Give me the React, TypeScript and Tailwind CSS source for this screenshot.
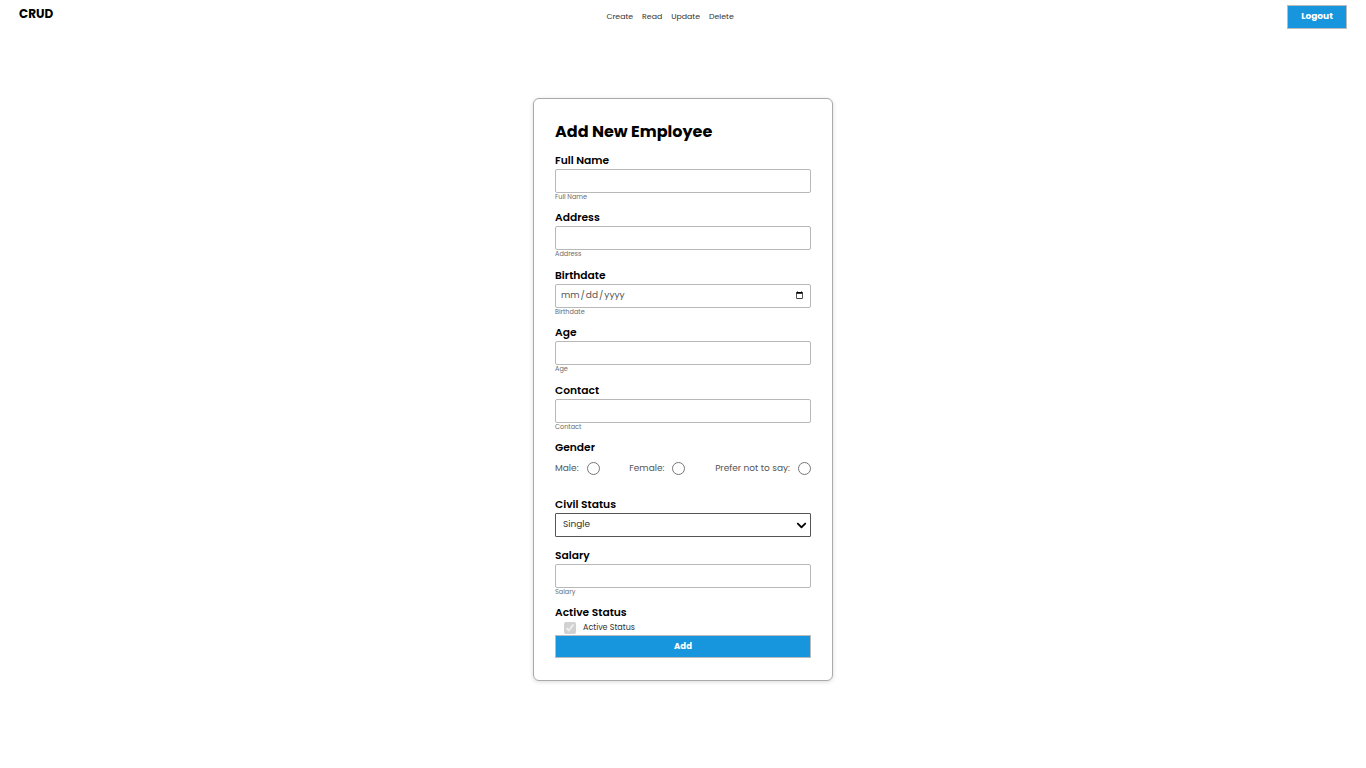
import { FaChevronDown } from "react-icons/fa";

const font = "font-['Poppins','Inter','Noto_Sans',sans-serif]";

const labelCls = "block pt-[1px] text-[10.7px] leading-[14px] font-semibold text-black";

const Field = ({ label, type = "text" }: { label: string; type?: string }) => {
  return (
    <div className="mb-[9.4px]">
      <label className={labelCls}>{label}</label>
      <input
        type={type}
        className="mt-[1px] block h-[24px] w-full rounded-[2px] border border-[#b8b8b8] px-[4px] text-[9px] text-[#555]"
      />
      <p className="text-[6.5px] leading-[8px] text-[#6b6b6b]">{label}</p>
    </div>
  );
};

const Radio = ({ label }: { label: string }) => (
  <label className="flex items-center gap-[8px] text-[9px] text-[#555]">
    {label}
    <input type="radio" name="gender" className="m-0 h-[13px] w-[13px]" />
  </label>
);

export default function App() {
  return (
    <div className={`min-h-screen bg-white ${font}`}>
      <header className="flex h-[33px] items-start justify-between pl-[19px] pr-[19px]">
        <div className="mt-[6px] text-[12px] leading-[16px] font-bold text-black">CRUD</div>
        <nav className="mt-[12px] flex gap-[9px] text-[7.8px] leading-[10px] text-[#333]">
          <a href="#">Create</a>
          <a href="#">Read</a>
          <a href="#">Update</a>
          <a href="#">Delete</a>
        </nav>
        <button className="mt-[5px] h-[24px] w-[60px] border border-[#bbb] bg-[#1795dd] text-[9px] font-bold text-white">
          Logout
        </button>
      </header>

      <form className="mx-auto mt-[65px] w-[300px] rounded-[6px] border border-[#aaa] bg-white px-[21px] pt-[22px] pb-[22px] shadow-[0_1px_4px_rgba(0,0,0,0.15)]">
        <h1 className="mb-[10px] text-[16px] leading-[22px] font-bold text-black">Add New Employee</h1>

        <Field label="Full Name" />
        <Field label="Address" />
        <Field label="Birthdate" type="date" />
        <Field label="Age" />
        <Field label="Contact" />

        <div className="mb-[20px]">
          <label className={labelCls}>Gender</label>
          <div className="mt-[6px] flex h-[16px] items-center justify-between">
            <Radio label="Male:" />
            <Radio label="Female:" />
            <Radio label="Prefer not to say:" />
          </div>
        </div>

        <div className="mb-[11px]">
          <label className={labelCls}>Civil Status</label>
          <div className="relative mt-[1px]">
            <select className="block h-[24px] w-full appearance-none rounded-[1px] border border-[#555] bg-white px-[7px] text-[9px] text-[#333]">
              <option>Single</option>
              <option>Married</option>
              <option>Widowed</option>
            </select>
            <FaChevronDown className="pointer-events-none absolute top-[7px] right-[4px] h-[11px] w-[11px] text-black" />
          </div>
        </div>

        <Field label="Salary" />

        <div>
          <label className={labelCls}>Active Status</label>
          <div className="mt-[1px] flex h-[14px] items-center gap-[7px] pl-[9px]">
            <input type="checkbox" checked disabled readOnly className="m-0 h-[12px] w-[12px]" />
            <span className="text-[8px] text-[#333]">Active Status</span>
          </div>
          <button
            type="button"
            className="block h-[23px] w-full border border-[#bbb] bg-[#1795dd] text-[8.5px] font-bold text-white"
          >
            Add
          </button>
        </div>
      </form>
    </div>
  );
}
